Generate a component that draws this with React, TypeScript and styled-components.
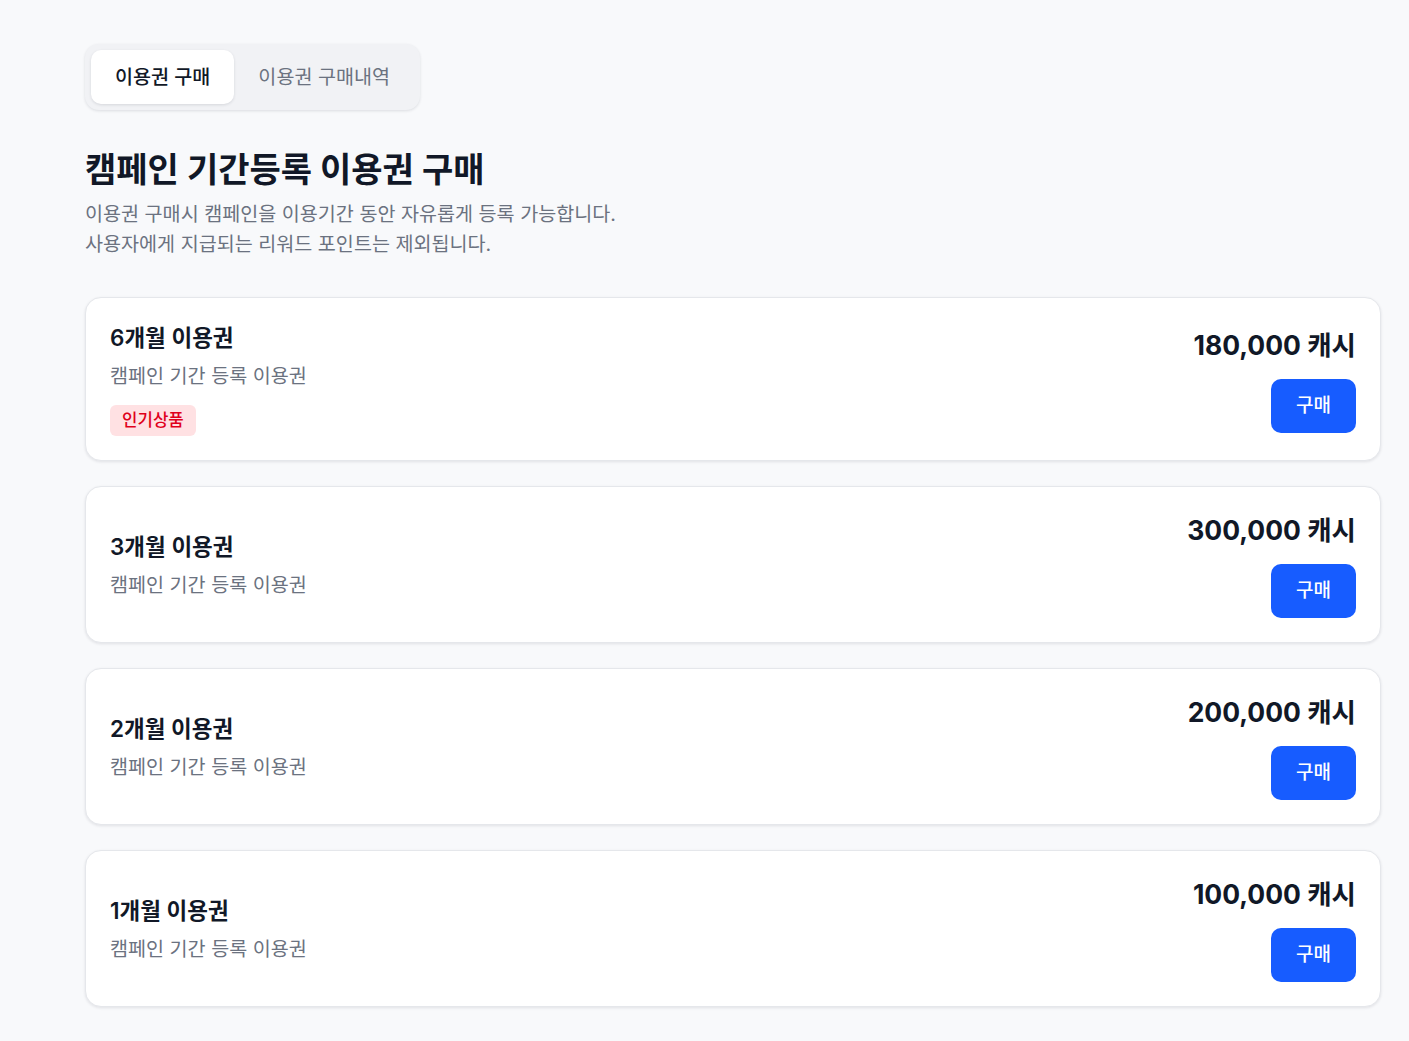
import React, { useState } from "react";
import styled, { createGlobalStyle } from "styled-components";

const GlobalStyle = createGlobalStyle`
  * { box-sizing: border-box; }
  html, body { margin: 0; padding: 0; background: #f8f9fb; }
  body {
    font-family: Inter, "Noto Sans CJK KR", "Noto Sans", sans-serif;
    color: #111827;
    -webkit-font-smoothing: antialiased;
  }
`;

const Page = styled.div`
  padding: 44px 28px 34px 85px;
  min-height: 1041px;
`;

const TabBar = styled.div`
  display: inline-flex;
  padding: 6px;
  background: #f1f2f5;
  border-radius: 14px;
  box-shadow: 0 1px 3px rgba(15, 23, 42, 0.12);
`;

const Tab = styled.button<{ $active?: boolean }>`
  border: none;
  font-family: inherit;
  font-size: 19.6px;
  line-height: 24px;
  padding: 15px 24px;
  border-radius: 10px;
  cursor: pointer;
  font-weight: ${(p) => (p.$active ? 500 : 400)};
  color: ${(p) => (p.$active ? "#111827" : "#6b7280")};
  background: ${(p) => (p.$active ? "#ffffff" : "transparent")};
  box-shadow: ${(p) => (p.$active ? "0 1px 3px rgba(15, 23, 42, 0.12)" : "none")};
`;

const Title = styled.h1`
  margin: 40px 0 9px;
  font-size: 34px;
  line-height: 40px;
  font-weight: 700;
  color: #111827;
`;

const Desc = styled.p`
  margin: 0;
  font-size: 19.6px;
  line-height: 30px;
  color: #6b7280;
`;

const List = styled.div`
  margin-top: 38px;
  display: flex;
  flex-direction: column;
  gap: 25px;
`;

const Card = styled.div`
  display: flex;
  align-items: center;
  justify-content: space-between;
  padding: 24px;
  background: #ffffff;
  border: 1px solid #e5e7eb;
  border-radius: 16px;
  box-shadow: 0 1px 3px rgba(15, 23, 42, 0.1);
`;

const Info = styled.div`
  display: flex;
  flex-direction: column;
  align-items: flex-start;
`;

const Name = styled.div`
  font-size: 22.5px;
  line-height: 32px;
  font-weight: 600;
  color: #111827;
`;

const Sub = styled.div`
  margin-top: 8px;
  font-size: 19.6px;
  line-height: 28px;
  color: #6b7280;
`;

const Badge = styled.span`
  margin-top: 15px;
  padding: 4px 12px 5px;
  font-size: 16.8px;
  line-height: 22px;
  font-weight: 500;
  color: #e0001b;
  background: #ffe1e3;
  border-radius: 6px;
`;

const Side = styled.div`
  display: flex;
  flex-direction: column;
  align-items: flex-end;
  gap: 15px;
`;

const Price = styled.div`
  font-size: 26.5px;
  line-height: 38px;
  font-weight: 700;
  color: #111827;
`;

const BuyButton = styled.button`
  border: none;
  font-family: inherit;
  font-size: 19px;
  line-height: 24px;
  font-weight: 500;
  color: #ffffff;
  background: #175cff;
  padding: 15px 25px;
  border-radius: 10px;
  cursor: pointer;
`;

const plans = [
  { name: "6개월 이용권", price: "180,000 캐시", popular: true },
  { name: "3개월 이용권", price: "300,000 캐시" },
  { name: "2개월 이용권", price: "200,000 캐시" },
  { name: "1개월 이용권", price: "100,000 캐시" },
];

export default function App() {
  const [tab, setTab] = useState(0);
  return (
    <>
      <GlobalStyle />
      <Page>
        <TabBar>
          <Tab $active={tab === 0} onClick={() => setTab(0)}>이용권 구매</Tab>
          <Tab $active={tab === 1} onClick={() => setTab(1)}>이용권 구매내역</Tab>
        </TabBar>
        <Title>캠페인 기간등록 이용권 구매</Title>
        <Desc>
          이용권 구매시 캠페인을 이용기간 동안 자유롭게 등록 가능합니다.
          <br />
          사용자에게 지급되는 리워드 포인트는 제외됩니다.
        </Desc>
        <List>
          {plans.map((p) => (
            <Card key={p.name}>
              <Info>
                <Name>{p.name}</Name>
                <Sub>캠페인 기간 등록 이용권</Sub>
                {p.popular && <Badge>인기상품</Badge>}
              </Info>
              <Side>
                <Price>{p.price}</Price>
                <BuyButton>구매</BuyButton>
              </Side>
            </Card>
          ))}
        </List>
      </Page>
    </>
  );
}
